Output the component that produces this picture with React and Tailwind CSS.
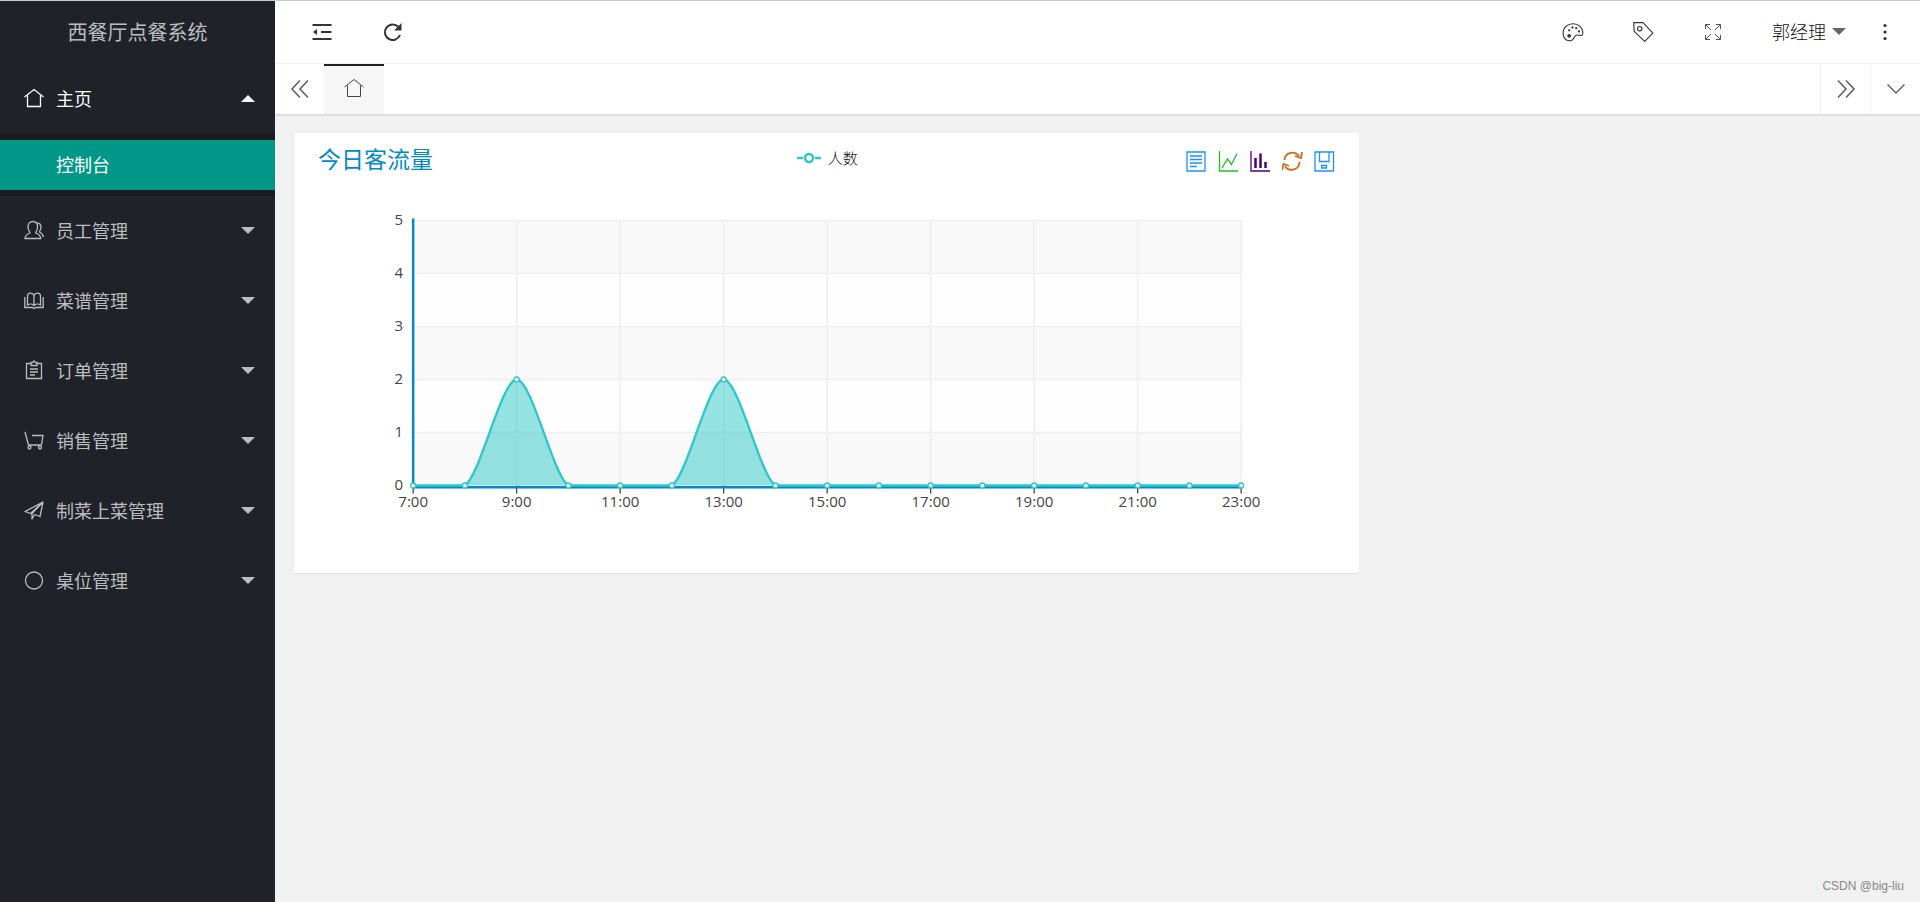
import React from 'react';
import clsx from 'clsx';

/* ── Icons ── */
function Icon({ size = 20, strokeWidth = 1, className, children }) {
  return (
    <svg
      width={size}
      height={size}
      viewBox="0 0 20 20"
      fill="none"
      stroke="currentColor"
      strokeWidth={strokeWidth}
      className={clsx('shrink-0', className)}
      aria-hidden="true"
    >
      {children}
    </svg>
  );
}

const HomeIcon = (props) => (
  <Icon {...props}>
    <path d="M.5 9 10 1.5 19.5 9M3.5 7.5v11h13v-11" />
  </Icon>
);

const UserIcon = (props) => (
  <Icon {...props}>
    <path d="M1 18.5c.3-3 2-4.6 5-5.5 0-1-2-2.500-2-6 0-3.500 2-5.500 4.800-5.500s4.800 2 4.800 5.500c0 3.500-2 5-2 6 3 .9 4.900 2.500 5.200 5.500z" />
    <path d="M13.500 3c2.500.3 3.500 2 3.500 4.300 0 2.200-1.500 3.700-1.500 4.700 2.200 1 3.500 2.500 4 5" />
  </Icon>
);

const BookIcon = (props) => (
  <Icon {...props}>
    <path d="M10 5.500C9 2.500 4 2 3.500 5.500v9.500c2-1.300 5-1.200 6.500.5 1.500-1.700 4.500-1.800 6.500-.5V5.500C16 2 11 2.500 10 5.500zM10 5.500V16" />
    <path d="M.8 7v10.500h7.400l1.800 1 1.800-1h7.400V7" />
  </Icon>
);

const OrderIcon = (props) => (
  <Icon {...props}>
    <path d="M7 3.500H2.500v15h15v-15H13M7 5.500v-3h1.500L10 1l1.500 1.500H13v3zM6 9h8M6 12h8M6 15h5" />
  </Icon>
);

const CartIcon = (props) => (
  <Icon {...props}>
    <path d="M1 2l3.500 13h13M8 5.500h11L17.500 15" />
    <circle cx="5.500" cy="17.500" r="1.500" />
    <circle cx="16" cy="17.500" r="1.500" />
  </Icon>
);

const PlaneIcon = (props) => (
  <Icon {...props}>
    <path d="M19 2 1 11.500l5.500 2zM19 2l-3 14.500-5.500-2M19 2 8 13.500V19l2.500-4.500" strokeLinejoin="round" />
  </Icon>
);

const CircleIcon = (props) => (
  <Icon {...props}>
    <circle cx="10" cy="10.500" r="8.500" />
  </Icon>
);

const FoldIcon = () => (
  <Icon strokeWidth={2} className="text-[#333]">
    <path d="M.5 3h19M9 10h10.500M.5 17h19" />
    <path d="M1 10 5 7v6z" fill="currentColor" stroke="none" />
  </Icon>
);

const RefreshIcon = () => (
  <Icon strokeWidth={2} className="text-[#333]">
    <path d="M16.500 5A7.800 7.800 0 1 0 18 13" />
    <path d="M19.500 1v7.500H12z" fill="currentColor" stroke="none" />
  </Icon>
);

const PaletteIcon = () => (
  <Icon size={22} className="text-[#333]">
    <path d="M10 2.500c5 0 9 3.500 9 8 0 1.500-.3 2.500-1.200 2.700-1.600.3-3.300-1-5-.2-2 .9-1.600 5-6 5C3 18 1 14.500 1 11c0-5 4-8.500 9-8.500z" />
    <circle cx="6.500" cy="13.500" r="1.700" fill="currentColor" stroke="none" />
    <circle cx="6.500" cy="8.500" r="1" fill="currentColor" stroke="none" />
    <circle cx="9.500" cy="5.800" r="1" fill="currentColor" stroke="none" />
    <circle cx="13" cy="6.500" r="1" fill="currentColor" stroke="none" />
    <circle cx="15.500" cy="9.500" r="1" fill="currentColor" stroke="none" />
  </Icon>
);

const TagIcon = () => (
  <Icon size={22} className="text-[#333]">
    <path d="M1.500 1.500h8.500l9 9.500-7.500 7.500-9.500-9z" strokeLinejoin="round" />
    <circle cx="7" cy="7" r="2" />
  </Icon>
);

const FullScreenIcon = () => (
  <Icon className="text-[#555]">
    <path d="M8 8 2.500 2.500M2.500 7V2.500H7M12 8l5.500-5.500M13 2.500h4.500V7M8 12l-5.500 5.500M2.500 13v4.500H7M12 12l5.500 5.500M13 17.500h4.500V13" />
  </Icon>
);

const PrevIcon = () => (
  <Icon strokeWidth={1.7} className="text-[#666]">
    <path d="M10 1.500 2 10l8 8.500M18 1.500 10 10l8 8.500" />
  </Icon>
);

const NextIcon = () => (
  <Icon strokeWidth={1.7} className="text-[#666]">
    <path d="m2 1.500 8 8.500-8 8.500M10 1.500l8 8.500-8 8.500" />
  </Icon>
);

const DownIcon = () => (
  <Icon strokeWidth={1.5} className="text-[#666]">
    <path d="m1.500 5.500 8.500 8.500 8.500-8.500" />
  </Icon>
);

function Caret({ up, className }) {
  return (
    <svg width="14" height="7" viewBox="0 0 14 7" fill="currentColor" className={className} aria-hidden="true">
      <path d={up ? 'M0 7l7-7 7 7z' : 'M0 0h14L7 7z'} />
    </svg>
  );
}

/* ── Data ── */
const MENU = [
  { label: '主页', icon: HomeIcon, children: ['控制台'] },
  { label: '员工管理', icon: UserIcon },
  { label: '菜谱管理', icon: BookIcon },
  { label: '订单管理', icon: OrderIcon },
  { label: '销售管理', icon: CartIcon },
  { label: '制菜上菜管理', icon: PlaneIcon },
  { label: '桌位管理', icon: CircleIcon },
];

const TOOLS = [
  {
    label: '数据视图',
    color: 'text-[#1e90ff]',
    path: 'M1 1h18v19H1zM4 5h12M4 8.500h12M4 12h12M4 15.500h7',
  },
  { label: '折线图切换', color: 'text-[#22bb22]', path: 'M1.500 0v20H20M4 17l5.500-9 4 5.500L19 2.500' },
  { label: '柱形图切换', color: 'text-[#4b0082]', bars: true, path: 'M1 0v20h19' },
  {
    label: '还原',
    color: 'text-[#d2691e]',
    thick: true,
    path: 'M2.500 9A8 8 0 0 1 17 5M20 1l-1 6-6-2M17.500 11A8 8 0 0 1 3 15.500M0 19l1.500-6 5.500 2',
  },
  {
    label: '保存为图片',
    color: 'text-[#1e90ff]',
    path: 'M1 1h18.500v19H1zM5.500 1v9.500h9.500V1M7.500 14.500h5v2.500h-5z',
  },
];

const VALUES = [0, 0, 2, 0, 0, 0, 2, 0, 0, 0, 0, 0, 0, 0, 0, 0, 0];

/* ── Chart geometry ── */
const LEFT = 119;
const TOP = 31.5;
const WIDTH = 828;
const HEIGHT = 265;
const BOTTOM = TOP + HEIGHT;
const STEP = WIDTH / 16;

const px = (i) => LEFT + i * STEP;
const py = (v) => BOTTOM - (v * HEIGHT) / 5;

// flat at the peaks, slightly opened where the curve leaves zero
const linePath = VALUES.reduce((d, v, i) => {
  if (i === 0) return `M${px(0)} ${py(v)}`;
  const prev = VALUES[i - 1];
  const startY = v > prev ? py(prev) - 9 : py(prev);
  const endY = v < prev ? py(v) - 9 : py(v);
  return `${d}C${px(i - 1) + 15} ${startY} ${px(i) - 15} ${endY} ${px(i)} ${py(v)}`;
}, '');

function Chart() {
  return (
    <svg
      viewBox="0 0 1065 384"
      className="block w-full h-96"
      fontFamily='"Open Sans", "Noto Sans", sans-serif'
      fontSize="15"
      fill="#444"
      role="img"
      aria-label="今日客流量"
    >
      {[0, 1, 2, 3, 4].map((v) => (
        <rect key={v} x={LEFT} y={py(v + 1)} width={WIDTH} height={HEIGHT / 5} fill={v % 2 ? '#fefefe' : '#f9f9f9'} />
      ))}
      <g stroke="#eee" strokeWidth="1.5">
        {[1, 2, 3, 4, 5].map((v) => (
          <line key={v} x1={LEFT} x2={LEFT + WIDTH} y1={py(v)} y2={py(v)} />
        ))}
        {[2, 4, 6, 8, 10, 12, 14, 16].map((i) => (
          <line key={i} x1={px(i)} x2={px(i)} y1={TOP} y2={BOTTOM} />
        ))}
      </g>

      {/* Axes */}
      <g stroke="#333" strokeWidth="1.2">
        {[0, 2, 4, 6, 8, 10, 12, 14, 16].map((i) => (
          <line key={i} x1={px(i)} x2={px(i)} y1={BOTTOM} y2={BOTTOM + 8} />
        ))}
      </g>
      <g stroke="#008acd" strokeWidth="2.5">
        <line x1={LEFT} x2={LEFT} y1={TOP - 2} y2={BOTTOM + 2} />
        <line x1={LEFT - 1} x2={LEFT + WIDTH + 1} y1={BOTTOM + 1.8} y2={BOTTOM + 1.8} />
      </g>

      {/* Series */}
      <path d={`${linePath}V${BOTTOM}H${LEFT}Z`} fill="#2ec7c9" fillOpacity="0.5" />
      <path d={linePath} fill="none" stroke="#2ec7c9" strokeWidth="2.3" />
      {VALUES.map((v, i) => (
        <circle key={i} cx={px(i)} cy={py(v)} r="2.5" fill="#fff" stroke="#2ec7c9" strokeWidth="1.3" />
      ))}

      {/* Labels */}
      {[0, 1, 2, 3, 4, 5].map((v) => (
        <text key={v} x={LEFT - 10} y={py(v) + 4} textAnchor="end">
          {v}
        </text>
      ))}
      {[0, 2, 4, 6, 8, 10, 12, 14, 16].map((i) => (
        <text key={i} x={px(i)} y={BOTTOM + 21} textAnchor="middle">
          {`${i + 7}:00`}
        </text>
      ))}
    </svg>
  );
}

function Sidebar() {
  return (
    <aside className="w-[275px] shrink-0 bg-[#20222a] text-[#bcbdbf]">
      <h1 className="h-[63px] flex items-center justify-center pb-0.5 text-xl">西餐厅点餐系统</h1>
      <nav>
        {MENU.map(({ label, icon: MenuIcon, children }) => (
          <div key={label}>
            <button
              className={clsx(
                'w-full h-[70px] flex items-center gap-3 pl-6 pr-5 pb-0.5 text-lg',
                children && 'text-white'
              )}
            >
              <MenuIcon strokeWidth={1.3} />
              {label}
              <Caret up={!!children} className="ml-auto" />
            </button>
            {children && (
              <div className="py-1.5 bg-[#191b21]">
                {children.map((child) => (
                  <a key={child} href="#" className="h-[50px] flex items-center pl-14 pb-0.5 text-lg text-white bg-[#009688]">
                    {child}
                  </a>
                ))}
              </div>
            )}
          </div>
        ))}
      </nav>
    </aside>
  );
}

function Header() {
  return (
    <header className="h-[63px] flex items-center justify-between bg-white border-b border-[#f3f3f3] pl-3 pr-2.5">
      <div className="flex">
        <button aria-label="侧边伸缩" className="w-[70px] flex justify-center"><FoldIcon /></button>
        <button aria-label="刷新" className="w-[70px] flex justify-center"><RefreshIcon /></button>
      </div>
      <div className="flex items-center">
        <button aria-label="主题" className="w-[70px] flex justify-center"><PaletteIcon /></button>
        <button aria-label="便签" className="w-[70px] flex justify-center"><TagIcon /></button>
        <button aria-label="全屏" className="w-[70px] flex justify-center"><FullScreenIcon /></button>
        <button className="flex items-center gap-1.5 pl-6 pr-3.5 pb-0.5 text-lg font-light text-[#111]">
          郭经理
          <Caret className="text-[#666]" />
        </button>
        <button aria-label="更多" className="w-[50px] flex justify-center text-[#333]">
          <Icon>
            <g fill="currentColor" stroke="none">
              <circle cx="10" cy="3.500" r="1.600" />
              <circle cx="10" cy="10" r="1.600" />
              <circle cx="10" cy="16.500" r="1.600" />
            </g>
          </Icon>
        </button>
      </div>
    </header>
  );
}

function TabBar() {
  return (
    <div className="h-[50px] flex bg-white shadow-[0_1px_2px_rgba(0,0,0,0.15)]">
      <button aria-label="向左" className="w-[49px] flex items-center justify-center"><PrevIcon /></button>
      <button aria-label="主页" className="w-[60px] flex items-center justify-center pb-1 bg-[#f6f6f6] border-t-2 border-[#20222a] text-[#444]">
        <HomeIcon />
      </button>
      <div className="flex-1" />
      <button aria-label="向右" className="w-[50px] flex items-center justify-center border-l border-[#f3f3f3]"><NextIcon /></button>
      <button aria-label="标签操作" className="w-[50px] flex items-center justify-center border-l border-[#f3f3f3]"><DownIcon /></button>
    </div>
  );
}

function VisitorCard() {
  return (
    <section className="w-2/3 bg-white rounded-xs shadow-[0_1px_2px_rgba(0,0,0,0.06)]">
      <div className="h-14 grid grid-cols-3 items-center px-6">
        <h2 className="pb-1.5 text-[23px] text-[#008acd]">今日客流量</h2>
        <button className="flex items-center justify-center gap-1.5 pb-1.5 text-[15px] text-[#111] font-light">
          <svg width="26" height="12" viewBox="0 0 26 12" fill="none" stroke="#2ec7c9" strokeWidth="2.5" aria-hidden="true">
            <path d="M1 6h6M19 6h6" />
            <circle cx="13" cy="6" r="4" />
          </svg>
          人数
        </button>
        <div className="flex justify-end gap-[11px]">
          {TOOLS.map((tool) => (
            <button key={tool.label} aria-label={tool.label} className={tool.color}>
              <svg width="21" height="21" viewBox="0 0 21 21" fill="none" stroke="currentColor" strokeWidth={tool.thick ? 1.8 : 1.3}>
                <path d={tool.path} />
                {tool.bars && <path d="M5.500 17V7M10.500 17V2.500M15.500 17v-6" strokeWidth="2.5" />}
              </svg>
            </button>
          ))}
        </div>
      </div>
      <Chart />
    </section>
  );
}

export default function App() {
  return (
    <div className='min-h-screen flex border-t border-[#ccc] bg-[#f1f1f1] font-["Noto_Sans_CJK_SC",sans-serif]'>
      <Sidebar />
      <div className="flex-1 flex flex-col">
        <Header />
        <TabBar />
        <main className="flex-1 py-[19px] pl-[19px] pr-7">
          <VisitorCard />
        </main>
        <footer className="px-4 pb-2 text-right text-xs leading-4 text-[#888] font-['Liberation_Sans',sans-serif]">
          CSDN @big-liu
        </footer>
      </div>
    </div>
  );
}
